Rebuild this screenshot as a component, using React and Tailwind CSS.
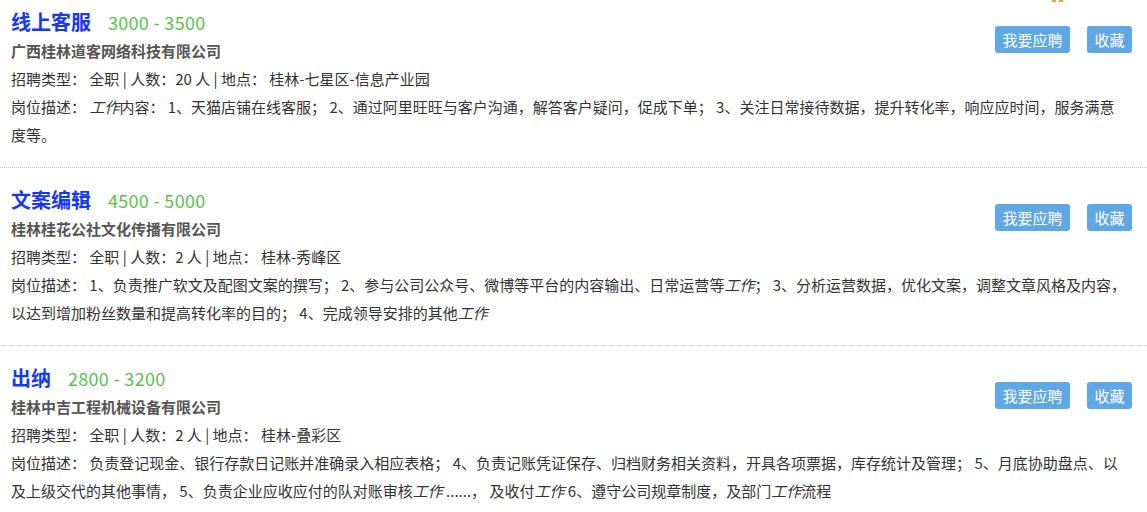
import React from 'react';

const jobs = [
  {
    title: '线上客服',
    salary: '3000 - 3500',
    company: '广西桂林道客网络科技有限公司',
    count: '20',
    place: '桂林-七星区-信息产业园',
    desc: [
      <>岗位描述： <em>工作</em>内容： 1、天猫店铺在线客服； 2、通过阿里旺旺与客户沟通，解答客户疑问，促成下单； 3、关注日常接待数据，提升转化率，响应应时间，服务满意</>,
      <>度等。</>,
    ],
    top: 'pt-[7px]',
  },
  {
    title: '文案编辑',
    salary: '4500 - 5000',
    company: '桂林桂花公社文化传播有限公司',
    count: '2',
    place: '桂林-秀峰区',
    desc: [
      <>岗位描述： 1、负责推广软文及配图文案的撰写； 2、参与公司公众号、微博等平台的内容输出、日常运营等<em>工作</em>； 3、分析运营数据，优化文案，调整文章风格及内容，</>,
      <>以达到增加粉丝数量和提高转化率的目的； 4、完成领导安排的其他<em>工作</em></>,
    ],
    top: 'pt-[17px]',
  },
  {
    title: '出纳',
    salary: '2800 - 3200',
    company: '桂林中吉工程机械设备有限公司',
    count: '2',
    place: '桂林-叠彩区',
    desc: [
      <>岗位描述： 负责登记现金、银行存款日记账并准确录入相应表格； 4、负责记账凭证保存、归档财务相关资料，开具各项票据，库存统计及管理； 5、月底协助盘点、以</>,
      <>及上级交代的其他事情， 5、负责企业应收应付的队对账审核<em>工作</em> ......， 及收付<em>工作</em> 6、遵守公司规章制度，及部门<em>工作</em>流程</>,
    ],
    top: 'pt-[17px]',
  },
];

const JobItem = ({ job }) => (
  <div className={`${job.top} pb-[18px] pl-[11px] pr-[15px] border-b border-dotted border-[#c8c8c8]`}>
    <div className="flex justify-between items-start">
      <div>
        <div className="h-[30px] flex items-center gap-[17px]">
          <span className="text-[20px] font-bold text-[#1538f5]">{job.title}</span>
          <span className="text-[18px] tracking-[0.3px] text-[#5cc24c]">{job.salary}</span>
        </div>
        <div className="h-[28px] leading-[28px] text-[15px] font-bold text-[#555]">{job.company}</div>
      </div>
      <div className="flex gap-[17px] mt-[19px]">
        <button className="h-[27px] w-[75px] rounded-[3px] bg-[#5fa7e5] text-white text-[15px] leading-[27px]">我要应聘</button>
        <button className="h-[27px] w-[45px] rounded-[3px] bg-[#5fa7e5] text-white text-[15px] leading-[27px]">收藏</button>
      </div>
    </div>
    <div className="leading-[28px] text-[15px] text-[#333]">
      招聘类型： 全职 | 人数：{job.count} 人 | 地点： {job.place}
    </div>
    <div className="text-[15px] text-[#333]">
      {job.desc.map((line, i) => (
        <div key={i} className="leading-[28px] whitespace-nowrap">{line}</div>
      ))}
    </div>
  </div>
);

export default function App() {
  return (
    <div className="relative w-[1147px] h-[512px] overflow-hidden bg-white font-['Noto_Sans_CJK_SC','Noto_Sans',sans-serif]">
      <span className="absolute top-0 left-[1052px] w-[4px] h-[2px] bg-[#f0a040]" />
      <span className="absolute top-0 left-[1059px] w-[4px] h-[2px] bg-[#f0a040]" />
      {jobs.map((job) => (
        <JobItem key={job.title} job={job} />
      ))}
    </div>
  );
}
